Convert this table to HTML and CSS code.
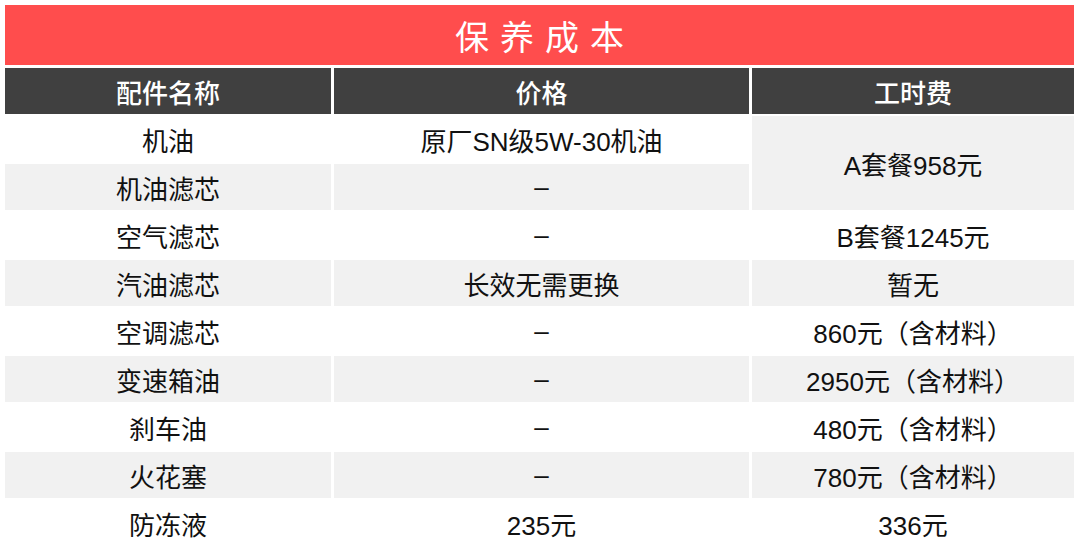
FILE: index.html
```html
<!DOCTYPE html>
<html lang="zh-CN">
<head>
<meta charset="utf-8">
<title>保养成本</title>
<link rel="stylesheet" href="styles.css">
</head>
<body>
<div class="wrap">
  <div class="title">保养成本</div>
  <div class="table">
    <div class="th">配件名称</div>
    <div class="th">价格</div>
    <div class="th">工时费</div>

    <div class="td">机油</div>
    <div class="td">原厂SN级5W-30机油</div>
    <div class="td gray span2">A套餐958元</div>

    <div class="td gray">机油滤芯</div>
    <div class="td gray">–</div>

    <div class="td">空气滤芯</div>
    <div class="td">–</div>
    <div class="td">B套餐1245元</div>

    <div class="td gray">汽油滤芯</div>
    <div class="td gray">长效无需更换</div>
    <div class="td gray">暂无</div>

    <div class="td">空调滤芯</div>
    <div class="td">–</div>
    <div class="td">860元（含材料）</div>

    <div class="td gray">变速箱油</div>
    <div class="td gray">–</div>
    <div class="td gray">2950元（含材料）</div>

    <div class="td">刹车油</div>
    <div class="td">–</div>
    <div class="td">480元（含材料）</div>

    <div class="td gray">火花塞</div>
    <div class="td gray">–</div>
    <div class="td gray">780元（含材料）</div>

    <div class="td">防冻液</div>
    <div class="td">235元</div>
    <div class="td">336元</div>
  </div>
</div>
</body>
</html>
```

FILE: styles.css
```css
html, body {
  margin: 0;
  padding: 0;
  background: #ffffff;
}

body {
  padding: 5px;
  font-family: "Liberation Sans", "Noto Sans CJK SC", sans-serif;
  color: #111111;
}

.wrap {
  width: 1069px;
}

.title {
  height: 60px;
  margin-bottom: 3px;
  background: #ff4d4d;
  color: #ffffff;
  font-size: 34px;
  letter-spacing: 11px;
  padding-left: 11px;
  display: flex;
  align-items: center;
  justify-content: center;
}

.table {
  display: grid;
  grid-template-columns: 326px 415px 322px;
  grid-auto-rows: 46px;
  column-gap: 3px;
  row-gap: 2px;
}

.th {
  background: #404040;
  color: #ffffff;
  font-size: 26px;
  font-weight: 500;
  display: flex;
  align-items: center;
  justify-content: center;
}

.td {
  font-size: 26px;
  display: flex;
  align-items: center;
  justify-content: center;
  background: #ffffff;
}

.gray {
  background: #f1f1f1;
}

.span2 {
  grid-row: span 2;
}
```
